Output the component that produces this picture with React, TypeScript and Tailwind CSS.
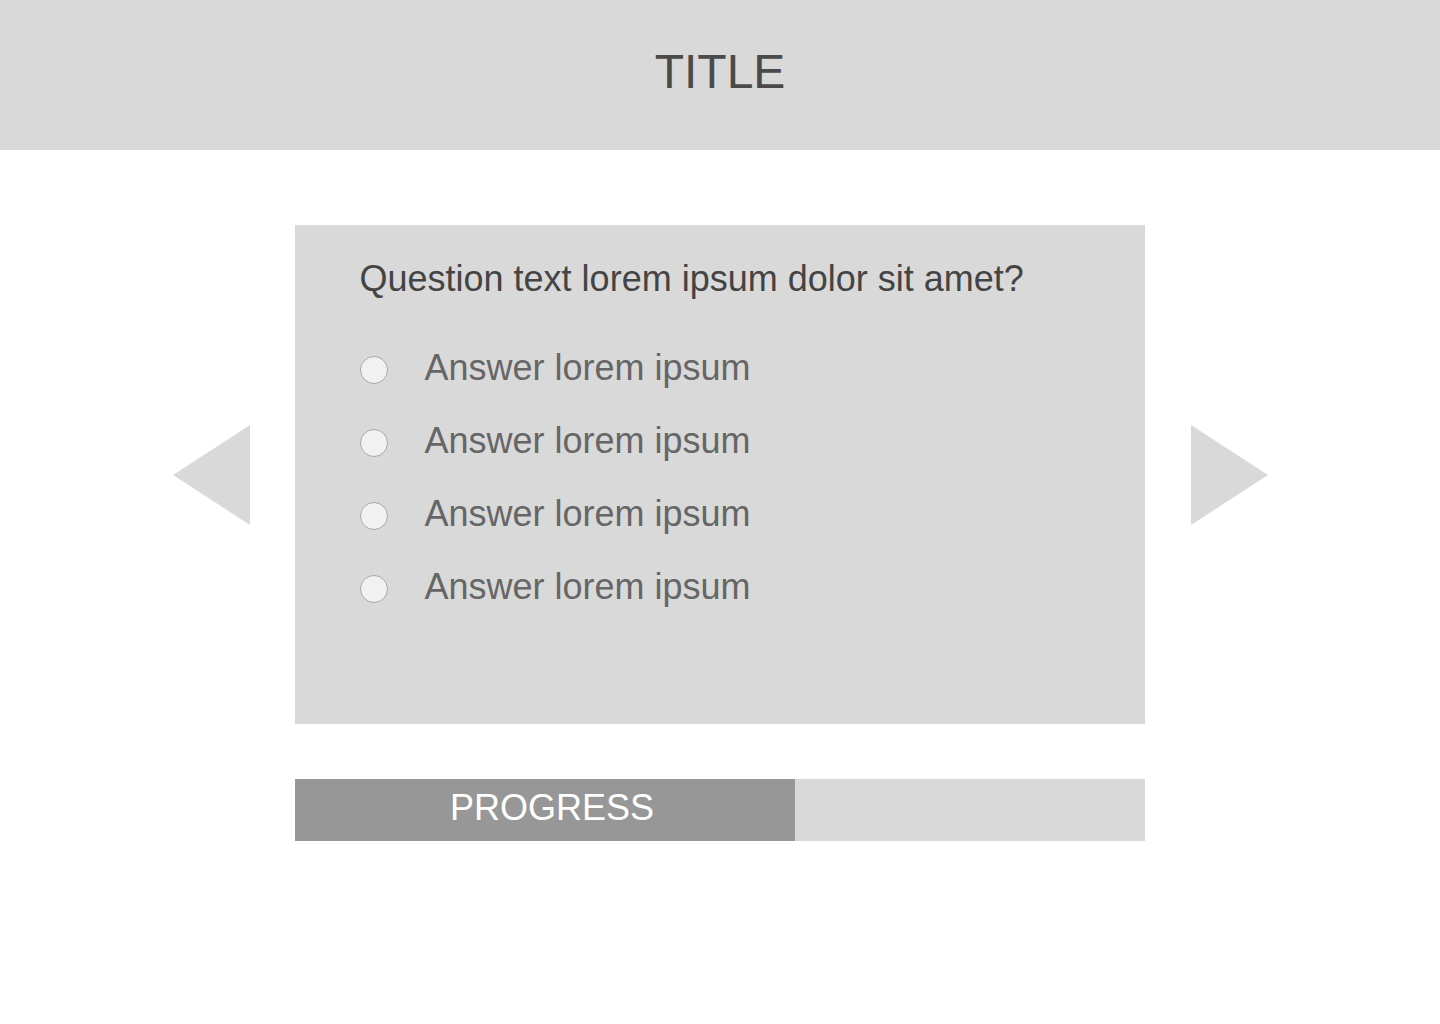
import React from "react";

const answers = ["Answer lorem ipsum", "Answer lorem ipsum", "Answer lorem ipsum", "Answer lorem ipsum"];

export default function App() {
  return (
    <div
      className="w-[1440px] min-h-[1024px] bg-white"
      style={{ fontFamily: '"Liberation Sans", Arial, Helvetica, sans-serif' }}
    >
      <header className="h-[150px] bg-[#d9d9d9] flex justify-center pt-[48px]">
        <h1 className="text-[48px] leading-[48px] text-[#4a4a4a]">TITLE</h1>
      </header>

      <main className="flex flex-col items-center pt-[75px]">
        <div className="flex items-center">
          <svg width="77" height="100" viewBox="0 0 77 100" className="mr-[45px]">
            <polygon points="77,0 77,100 0,50" fill="#d9d9d9" />
          </svg>

          <section className="w-[850px] h-[499px] bg-[#d9d9d9] pl-[65px] pt-[36px]">
            <p className="text-[36px] leading-[36px] text-[#444444]">
              Question text lorem ipsum dolor sit amet?
            </p>
            <ul className="mt-[53px] flex flex-col gap-[37px]">
              {answers.map((a, i) => (
                <li key={i} className="flex items-center h-[36px]">
                  <span className="w-[28px] h-[28px] rounded-full border border-[#a8a8a8] bg-[#f1f1f1] mt-[3px] shrink-0" />
                  <span className="ml-[37px] text-[36px] leading-[36px] text-[#666666]">{a}</span>
                </li>
              ))}
            </ul>
          </section>

          <svg width="77" height="100" viewBox="0 0 77 100" className="ml-[46px]">
            <polygon points="0,0 0,100 77,50" fill="#d9d9d9" />
          </svg>
        </div>

        <div className="mt-[55px] w-[850px] h-[62px] bg-[#d9d9d9] flex">
          <div className="w-[500px] h-full bg-[#979797] flex items-center justify-center pl-[14px] pb-[5px]">
            <span className="text-[36px] leading-[36px] text-white">PROGRESS</span>
          </div>
        </div>
      </main>
    </div>
  );
}
